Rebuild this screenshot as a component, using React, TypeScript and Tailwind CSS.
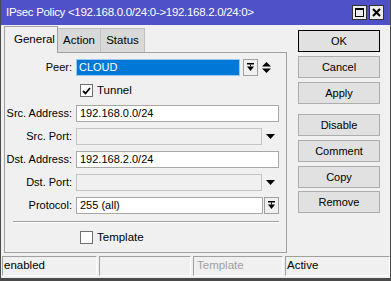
import type { ReactNode } from 'react';

const font = { fontFamily: '"Liberation Sans", Arial, sans-serif' };

function DropIcon() {
  return (
    <svg width="7" height="9" viewBox="0 0 7 9">
      <rect x="0" y="0" width="7" height="1.5" fill="#000" />
      <rect x="3" y="1.5" width="1" height="2" fill="#000" />
      <polygon points="0,3.5 7,3.5 3.5,8" fill="#000" />
    </svg>
  );
}

function DropButton() {
  return (
    <div className="ml-[1px] flex h-[17px] w-[15px] items-center justify-center border border-[#a0a0a0] bg-[#f0f0f0]">
      <DropIcon />
    </div>
  );
}

function DownArrow() {
  return (
    <div className="flex w-[17px] items-center justify-center">
      <svg width="9" height="5" viewBox="0 0 9 5">
        <polygon points="0,0 9,0 4.5,5" fill="#000" />
      </svg>
    </div>
  );
}

function UpDown() {
  return (
    <div className="flex w-[17px] items-center justify-center">
      <svg width="9" height="11" viewBox="0 0 9 11">
        <polygon points="4.5,0 9,4.5 0,4.5" fill="#000" />
        <polygon points="0,6.5 9,6.5 4.5,11" fill="#000" />
      </svg>
    </div>
  );
}

function Row({ label, children }: { label: string; children: ReactNode }) {
  return (
    <div className="flex h-[17px] items-center">
      <div className="w-[71px] pr-[4px] text-right">{label}</div>
      <div className="flex h-[17px] flex-1 items-stretch">{children}</div>
    </div>
  );
}

function Field({ value, disabled }: { value?: string; disabled?: boolean }) {
  return (
    <div
      className={`flex h-[17px] flex-1 items-center border px-[3px] ${
        disabled ? 'border-[#c4c4c4] bg-[#f0f0f0]' : 'border-[#a8a8a8] bg-white'
      }`}
    >
      {value}
    </div>
  );
}

function Check({ checked, label }: { checked?: boolean; label: string }) {
  return (
    <div className="flex h-[17px] items-center pl-[75px]">
      <div className="flex h-[13px] w-[13px] items-center justify-center border border-[#707070] bg-white">
        {checked && (
          <svg width="9" height="8" viewBox="0 0 9 8">
            <polyline points="1,4 3.5,6.5 8,1" fill="none" stroke="#000" strokeWidth="1.8" />
          </svg>
        )}
      </div>
      <span className="ml-[4px] text-[11.5px]">{label}</span>
    </div>
  );
}

function Btn({ children, primary, className = '' }: { children: ReactNode; primary?: boolean; className?: string }) {
  return (
    <div
      className={`flex h-[22px] w-[82px] items-center justify-center bg-[#e1e1e1] ${
        primary ? 'border border-[#000]' : 'border border-[#adadad]'
      } ${className}`}
    >
      {children}
    </div>
  );
}

export default function App() {
  return (
    <div
      className="relative flex h-[281px] w-[391px] flex-col overflow-hidden border-b-[3px] border-l border-r border-[#4a4a4a] bg-[#f0f0f0] text-[11px] text-black"
      style={font}
    >
      {/* title bar */}
      <div className="flex h-[25px] shrink-0 items-center bg-[#4e51c8] pl-[5px] pr-[6px]">
        <span className="flex-1 text-[11.5px] tracking-[-0.3px] text-white">IPsec Policy &lt;192.168.0.0/24:0-&gt;192.168.2.0/24:0&gt;</span>
        <div className="flex gap-[2px]">
          <div className="flex h-[15px] w-[15px] items-center justify-center border border-[#333] bg-[#ececec]">
            <div className="h-[9px] w-[9px] border border-t-2 border-black" />
          </div>
          <div className="flex h-[15px] w-[15px] items-center justify-center border border-[#333] bg-[#ececec]">
            <svg width="9" height="9" viewBox="0 0 9 9">
              <path d="M1 1 L8 8 M8 1 L1 8" stroke="#000" strokeWidth="2" />
            </svg>
          </div>
        </div>
      </div>

      {/* main */}
      <div className="flex h-[231px] shrink-0">
        <div className="ml-[3px] flex w-[283px] flex-col">
          <div className="flex h-[27px] items-end">
            <div className="relative z-10 -mb-px flex h-[27px] w-[54px] items-center border border-b-0 border-[#a0a0a0] bg-[#f0f0f0] pl-[9px] text-[11.5px]">
              General
            </div>
            <div className="flex h-[24px] w-[43px] items-center justify-center border-r border-t border-[#c0c0c0] bg-[#d9d9d9] text-[11.5px]">
              Action
            </div>
            <div className="flex h-[24px] w-[44px] items-center justify-center border-r border-t border-[#c0c0c0] bg-[#d9d9d9] text-[11.5px]">
              Status
            </div>
          </div>
          <div className="flex h-[201px] flex-col border border-[#a0a0a0] pr-[7px] pt-[6px]">
            <div className="flex flex-col gap-[6px]">
              <Row label="Peer:">
                <div className="flex h-[17px] w-[164px] items-center border border-[#99c9ef] bg-[#0078d7] px-[2px] text-white">
                  CLOUD
                </div>
                <div className="ml-[2px]">
                  <DropButton />
                </div>
                <UpDown />
              </Row>
              <Check checked label="Tunnel" />
              <Row label="Src. Address:">
                <Field value="192.168.0.0/24" />
              </Row>
              <Row label="Src. Port:">
                <Field disabled />
                <DownArrow />
              </Row>
              <Row label="Dst. Address:">
                <Field value="192.168.2.0/24" />
              </Row>
              <Row label="Dst. Port:">
                <Field disabled />
                <DownArrow />
              </Row>
              <Row label="Protocol:">
                <Field value="255 (all)" />
                <DropButton />
              </Row>
            </div>
            <div className="ml-[8px] mt-[7px] border-b border-t border-b-white border-t-[#a0a0a0]" />
            <div className="mt-[6px]">
              <Check label="Template" />
            </div>
          </div>
        </div>

        <div className="ml-[11px] mt-[5px] flex flex-col">
          <Btn primary>OK</Btn>
          <Btn className="mt-[4px]">Cancel</Btn>
          <Btn className="mt-[4px]">Apply</Btn>
          <Btn className="mt-[10px]">Disable</Btn>
          <Btn className="mt-[4px]">Comment</Btn>
          <Btn className="mt-[4px]">Copy</Btn>
          <Btn className="mt-[3px]">Remove</Btn>
        </div>
      </div>

      {/* status bar */}
      <div className="flex h-[20px] shrink-0 gap-[2px] pl-[1px] text-[11.5px]">
        <div className="flex w-[95px] items-center border border-[#a0a0a0] border-b-white border-r-white pl-[1px]">enabled</div>
        <div className="w-[92px] border border-[#a0a0a0] border-b-white border-r-white" />
        <div className="flex w-[90px] items-center border border-[#a0a0a0] border-b-white border-r-white pl-[3px] text-[#a0a0a0]">
          Template
        </div>
        <div className="flex flex-1 items-center border border-[#a0a0a0] border-b-white border-r-white pl-[1px]">Active</div>
      </div>
    </div>
  );
}
